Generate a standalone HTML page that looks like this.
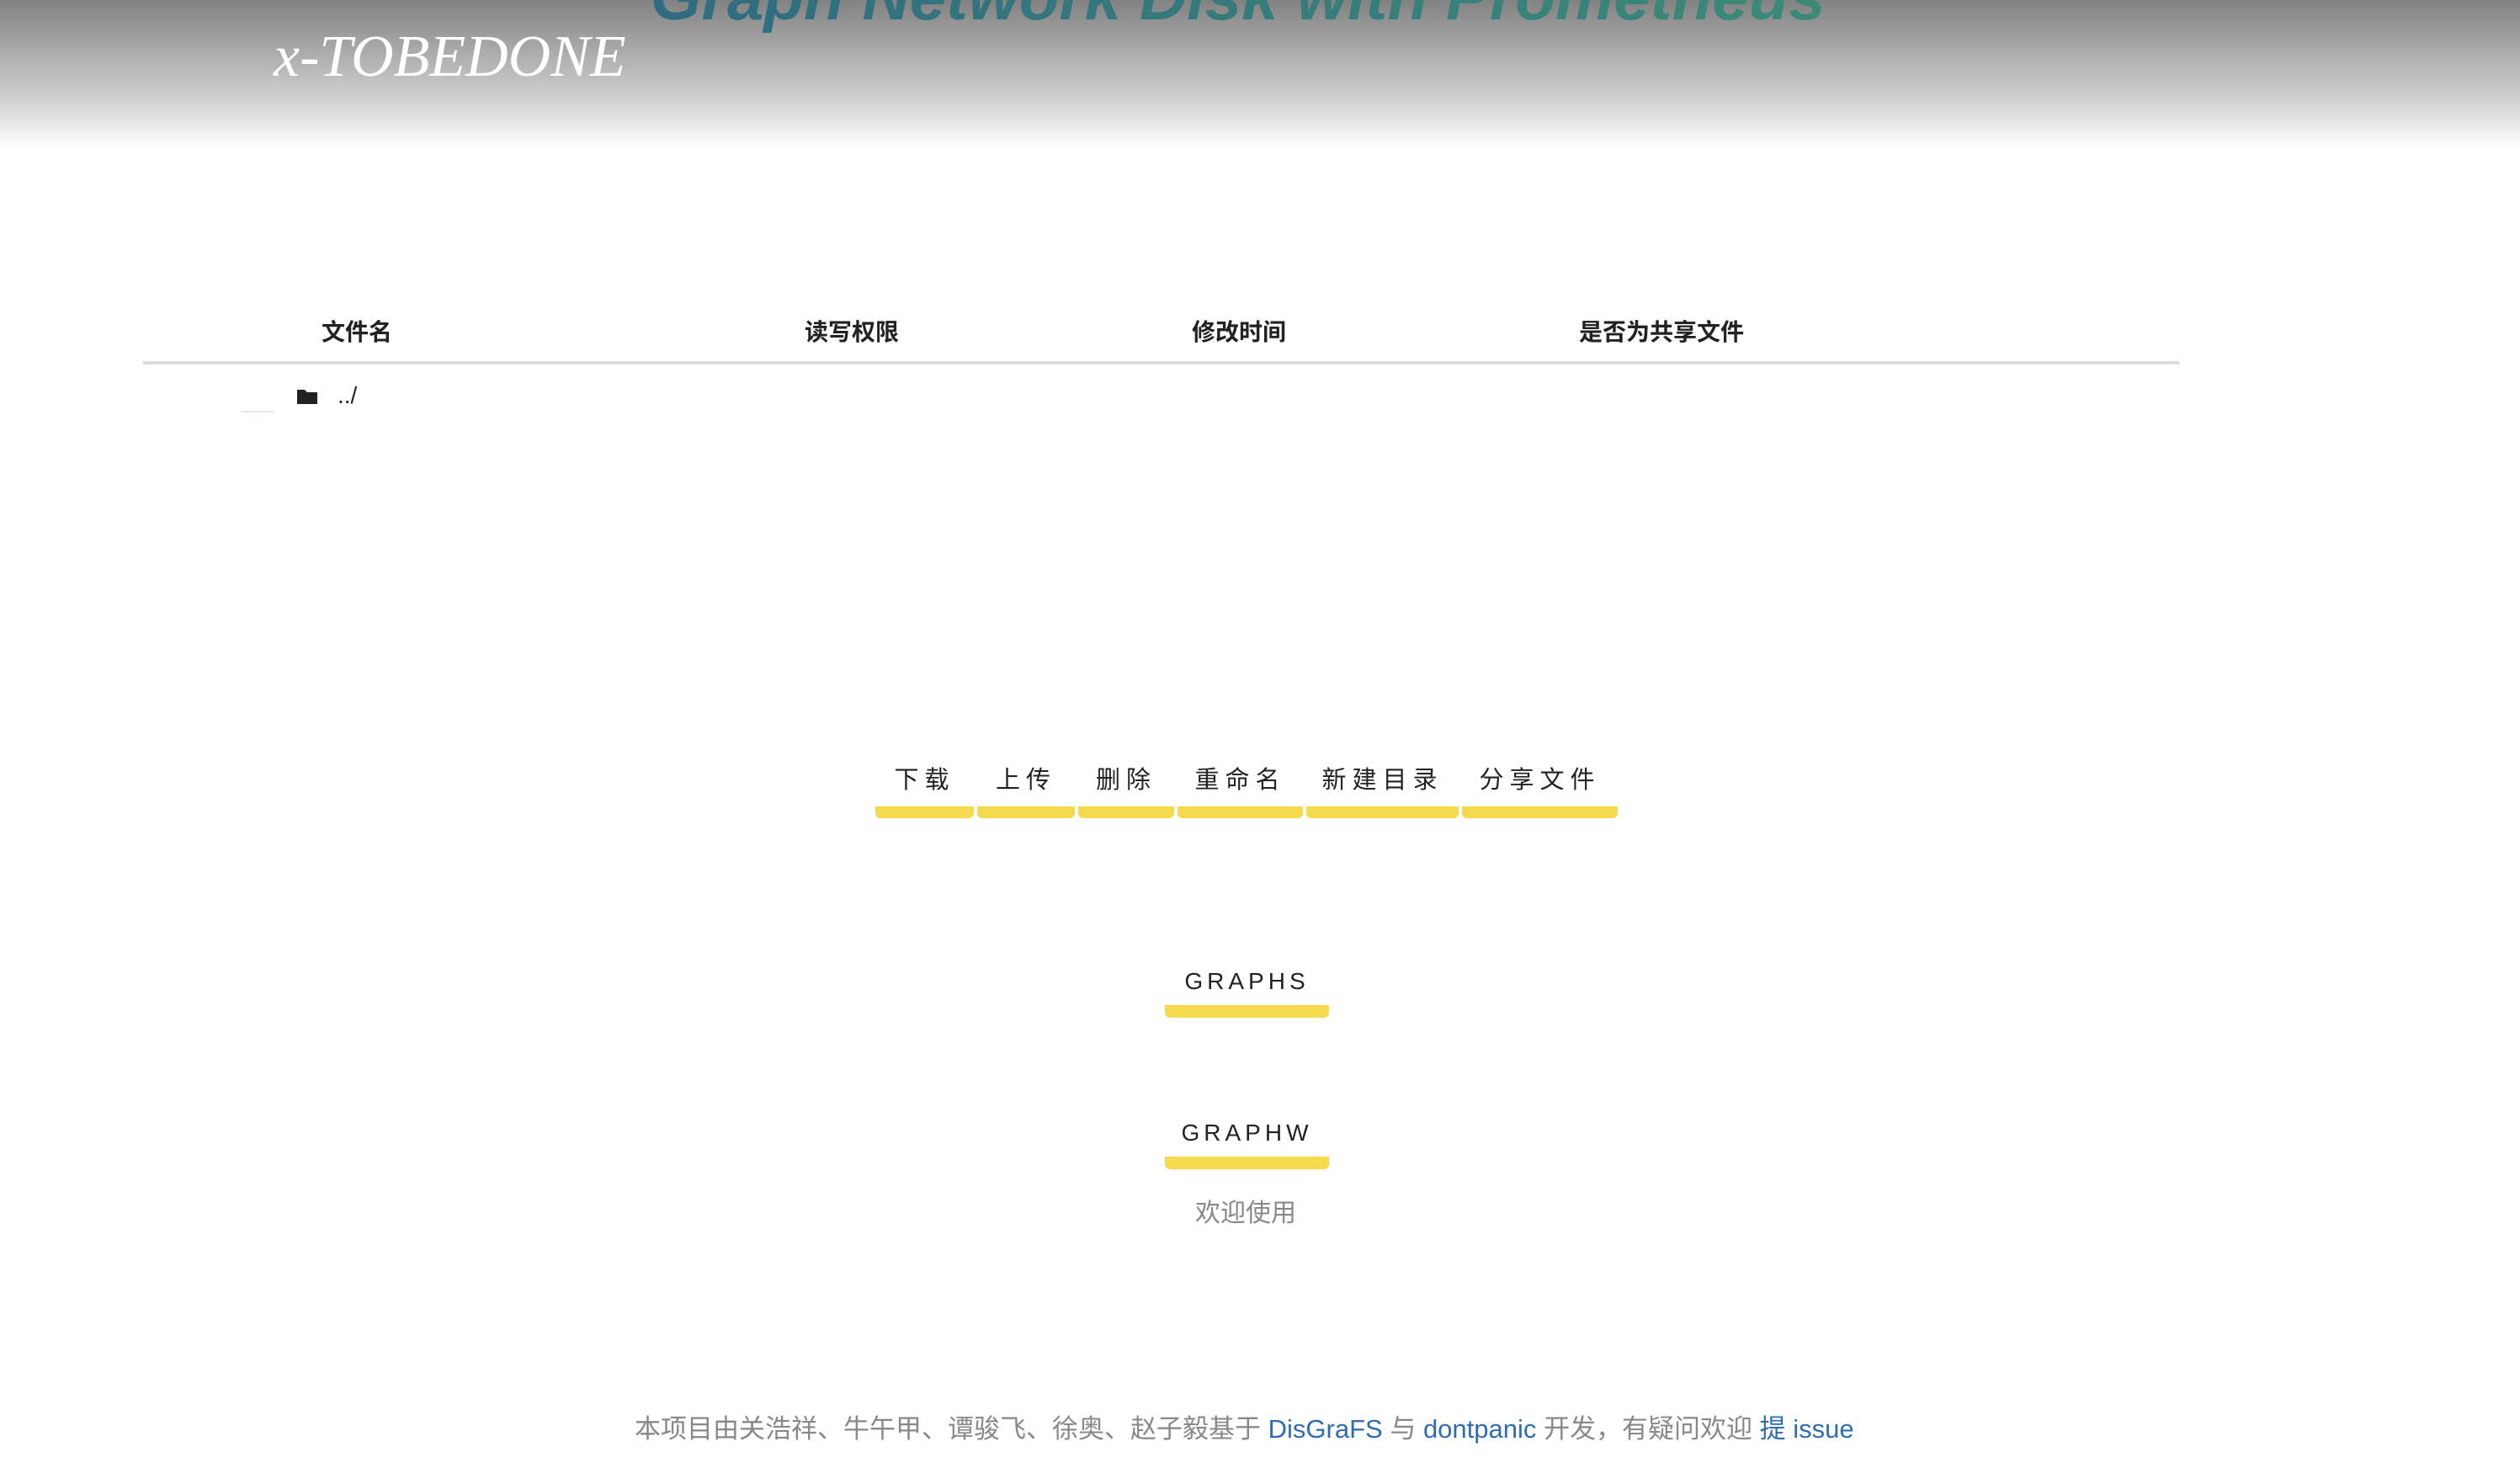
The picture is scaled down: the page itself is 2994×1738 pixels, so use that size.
<!DOCTYPE html>
<html><head><meta charset="utf-8"><style>
*{margin:0;padding:0;box-sizing:border-box}
body{width:2994px;height:1738px;position:relative;background:#fff;overflow:hidden;font-family:"Liberation Sans","Noto Sans CJK SC",sans-serif;color:#222}
.hdr{position:absolute;left:0;top:0;width:2994px;height:178px;background:linear-gradient(#828282,#c9c9c9 60%,#fff)}
.title{position:absolute;left:773px;top:-54px;font-size:78px;font-weight:bold;font-style:italic;white-space:nowrap;background:linear-gradient(90deg,#2f6c80,#3b8a78);-webkit-background-clip:text;color:transparent;line-height:100px}
.logo{position:absolute;left:325px;top:28px;font-family:"Liberation Serif",serif;font-style:italic;font-size:70px;color:#fff;line-height:80px;white-space:nowrap;letter-spacing:0px}
.th{position:absolute;top:376px;font-size:28px;font-weight:bold;line-height:38px;white-space:nowrap}
.line{position:absolute;left:170px;top:429px;width:2419px;height:4px;background:#ddd}
.abs{position:absolute;white-space:nowrap}
.btn{position:absolute;top:902px;height:70px;text-align:center;font-size:29px;letter-spacing:7px;line-height:50px;border-bottom:14px solid #f6da4e;border-radius:0 0 6px 6px;color:#222}
.btn2{position:absolute;left:1384px;width:195px;height:64px;text-align:center;font-size:28px;letter-spacing:5px;line-height:42px;border-bottom:15px solid #f6da4e;border-radius:0 0 6px 6px}
a{color:#2f6db3;text-decoration:none}
</style></head><body>
<div class="hdr"></div>
<div class="title">Graph Network Disk with Prometheus</div>
<div class="logo">x-TOBEDONE</div>
<div class="th" style="left:382px">文件名</div>
<div class="th" style="left:956px">读写权限</div>
<div class="th" style="left:1416px">修改时间</div>
<div class="th" style="left:1876px">是否为共享文件</div>
<div class="line"></div>
<div class="abs" style="left:286px;top:488px;width:40px;height:2px;background:#e6e6e6"></div>
<svg class="abs" style="left:352px;top:461px" width="26" height="20" viewBox="0 0 26 20"><path d="M1 2h9l3 3h12v14H1z" fill="#222"/></svg>
<div class="abs" style="left:401px;top:452px;font-size:28px;line-height:36px">../</div>
<div class="btn" style="left:1040px;width:117px">下载</div>
<div class="btn" style="left:1161px;width:116px">上传</div>
<div class="btn" style="left:1281px;width:114px">删除</div>
<div class="btn" style="left:1399px;width:149px">重命名</div>
<div class="btn" style="left:1552px;width:181px">新建目录</div>
<div class="btn" style="left:1737px;width:185px">分享文件</div>
<div class="btn2" style="top:1145px">GRAPHS</div>
<div class="btn2" style="top:1325px">GRAPHW</div>
<div class="abs" style="left:1420px;top:1423px;font-size:30px;color:#888;line-height:38px">欢迎使用</div>
<div class="abs" style="left:754px;top:1679px;font-size:31px;color:#888;line-height:38px">本项目由关浩祥、牛午甲、谭骏飞、徐奥、赵子毅基于 <a>DisGraFS</a> 与 <a>dontpanic</a> 开发，有疑问欢迎 <a>提 issue</a></div>
</body></html>
